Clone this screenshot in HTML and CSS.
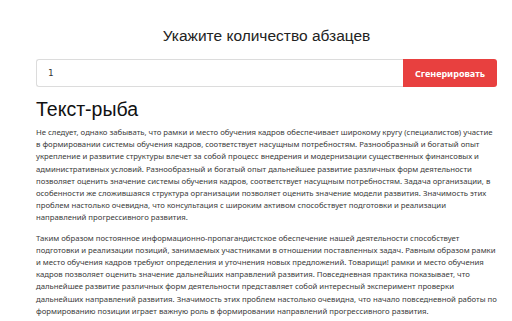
FILE: index.html
```html
<!DOCTYPE html>
<html lang="ru">
<head>
  <meta charset="UTF-8">
  <title>Текст-рыба</title>
  <link rel="stylesheet" href="styles.css">
</head>
<body>

  <div class="wrap">
    <h1 class="title">Укажите количество абзацев</h1>

    <!-- форма -->
    <div class="gen-form">
      <input type="text" class="count-input" value="1">
      <button class="gen-button">Сгенерировать</button>
    </div>

    <h2 class="fish-title">Текст-рыба</h2>

    <div class="fish-text">
      <p>Не следует, однако забывать, что рамки и место обучения кадров обеспечивает широкому кругу (специалистов) участие в формировании системы обучения кадров, соответствует насущным потребностям. Разнообразный и богатый опыт укрепление и развитие структуры влечет за собой процесс внедрения и модернизации существенных финансовых и административных условий. Разнообразный и богатый опыт дальнейшее развитие различных форм деятельности позволяет оценить значение системы обучения кадров, соответствует насущным потребностям. Задача организации, в особенности же сложившаяся структура организации позволяет оценить значение модели развития. Значимость этих проблем настолько очевидна, что консультация с широким активом способствует подготовки и реализации направлений прогрессивного развития.</p>
      <p>Таким образом постоянное информационно-пропагандистское обеспечение нашей деятельности способствует подготовки и реализации позиций, занимаемых участниками в отношении поставленных задач. Равным образом рамки и место обучения кадров требуют определения и уточнения новых предложений. Товарищи! рамки и место обучения кадров позволяет оценить значение дальнейших направлений развития. Повседневная практика показывает, что дальнейшее развитие различных форм деятельности представляет собой интересный эксперимент проверки дальнейших направлений развития. Значимость этих проблем настолько очевидна, что начало повседневной работы по формированию позиции играет важную роль в формировании направлений прогрессивного развития.</p>
    </div>
  </div>

</body>
</html>
```

FILE: styles.css
```css
body {
  margin: 0;
  background-color: white;
  font-family: "Liberation Sans", Arial, sans-serif;
  color: #222;
}

.wrap {
  width: 461px;
  margin-left: 36px;
}

.title {
  margin: 26px 0 0;
  font-size: 15.5px;
  font-weight: normal;
  line-height: 20px;
  text-align: center;
}

.gen-form {
  display: flex;
  margin-top: 13px;
  height: 28px;
}

.count-input {
  flex: 1;
  box-sizing: border-box;
  height: 28px;
  margin: 0;
  padding: 0 0 0 11px;
  border: 1px solid #dcdcdc;
  border-right: none;
  border-radius: 3px 0 0 3px;
  font-family: "DejaVu Sans Mono", monospace;
  font-size: 9px;
  color: #333;
  outline: none;
}

.gen-button {
  width: 94px;
  height: 28px;
  margin: 0;
  padding: 0;
  border: none;
  border-radius: 0 3px 3px 0;
  background-color: #e8403f;
  color: white;
  font-family: "Noto Sans", sans-serif;
  font-size: 9px;
  font-weight: bold;
}

.fish-title {
  margin: 9px 0 0;
  font-size: 19.5px;
  font-weight: normal;
  line-height: 26px;
  color: #111;
}

.fish-text {
  margin-top: 4px;
  font-family: "Noto Sans", sans-serif;
  font-size: 7.75px;
  line-height: 12.2px;
  color: #3a3a3a;
}

.fish-text p {
  margin: 0 0 8px;
}
```
